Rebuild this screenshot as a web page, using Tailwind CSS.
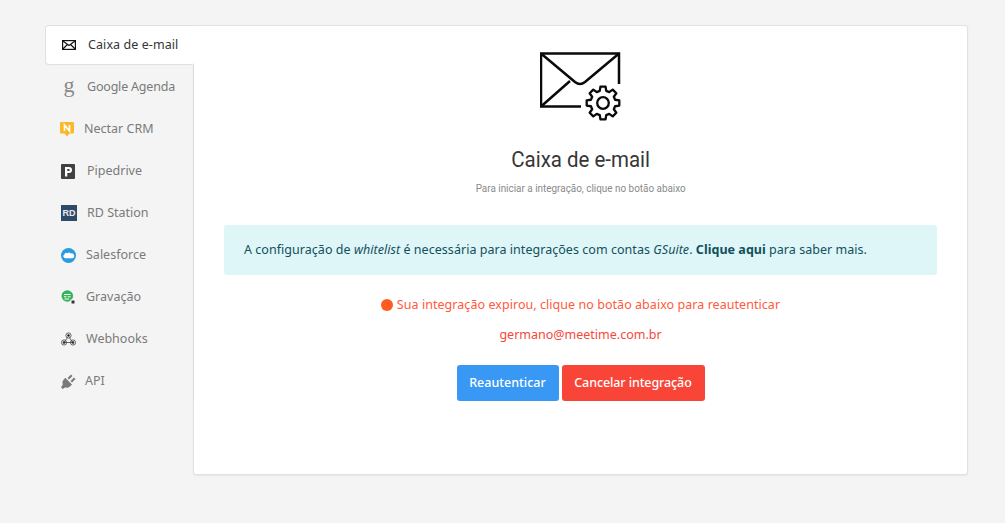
<!DOCTYPE html>
<html lang="pt-BR">
<head>
<meta charset="utf-8">
<script src="https://cdn.jsdelivr.net/npm/@tailwindcss/browser@4"></script>
</head>
<body class="bg-[#f4f4f4]">
<div class="h-[523px] w-[1005px] overflow-hidden flex items-start pt-[25px] pl-[45px] font-['Noto_Sans',sans-serif] text-[12.5px]">
  <nav class="w-[149px] shrink-0 relative z-10 flex flex-col">
    <a class="h-[40px] w-[149px] flex items-center pl-[16px] bg-white border border-[#e0e0e0] border-r-0 rounded-l-[4px] rounded-br-[2px] text-[#363636] tracking-[0.08px]">
      <svg class="w-[14px] h-[10px] mr-[12px]" viewBox="0 0 14 10" fill="none" stroke="#111" stroke-width="1.2"><rect x=".6" y=".6" width="12.8" height="8.8"/><path d="M.6.8 7 5.6 13.4.8M.6 9.2l4.6-4.4M13.4 9.2 8.8 4.8"/></svg>
      <span>Caixa de e-mail</span>
    </a>
    <div class="border-r border-[#dedede] flex flex-col text-[#7a7a7a] pt-px">
      <a class="h-[42px] flex items-center pl-[17px]">
        <span class="w-[14px] h-[18px] mr-[11px] text-center text-[#8a8a8a] text-[22px] leading-[13px] font-['Liberation_Serif',serif]">g</span>
        <span class="tracking-[-0.2px]">Google Agenda</span>
      </a>
      <a class="h-[42px] flex items-center pl-[15px]">
        <svg class="w-[14px] h-[16px] mr-[10px]" viewBox="0 0 14 16"><path d="M1 1h12a1 1 0 0 1 1 1v9.500a1 1 0 0 1-1 1H9.500L7 15.500 4.500 12.500H1a1 1 0 0 1-1-1V2a1 1 0 0 1 1-1z" fill="#fbb829"/><path d="M4.500 10V4l5 6V4" fill="none" stroke="#fff" stroke-width="1.700"/></svg>
        <span>Nectar CRM</span>
      </a>
      <a class="h-[42px] flex items-center pl-[16px]">
        <svg class="w-[14px] h-[15px] mr-[12px]" viewBox="0 0 14 15"><rect width="14" height="15" rx="1" fill="#3f4142"/><path d="M4 3h4a2.700 2.700 0 0 1 0 6H6.300v3.500H4zM6.300 4.900v2.200h1.400a1.100 1.100 0 0 0 0-2.200z" fill="#fff" fill-rule="evenodd"/></svg>
        <span>Pipedrive</span>
      </a>
      <a class="h-[42px] flex items-center pl-[16px]">
        <span class="w-[16px] h-[16px] mr-[10px] bg-[#2f4a68] text-[#e8edf2] text-[9px] font-bold leading-[16px] text-center font-['Liberation_Sans',sans-serif]">RD</span>
        <span>RD Station</span>
      </a>
      <a class="h-[42px] flex items-center pl-[16px]">
        <svg class="w-[15px] h-[15px] mr-[10px]" viewBox="0 0 15 15"><circle cx="7.500" cy="7.500" r="7.500" fill="#2b9be0"/><path d="M4.200 10.200a1.900 1.900 0 0 1-.8-3.600A2 2 0 0 1 6.600 5.300a2.100 2.100 0 0 1 3.200.3 2.400 2.400 0 0 1 1.800 4.600z" fill="#fff"/></svg>
        <span>Salesforce</span>
      </a>
      <a class="h-[42px] flex items-center pl-[16px]">
        <svg class="w-[14px] h-[14px] mr-[11px]" viewBox="0 0 14 14"><circle cx="6.300" cy="6" r="5.800" fill="#35b55a"/><path d="M3 4.500h6.500M3 6.800h2.500M6.800 6.800h2.700M3.500 9h4.500" stroke="#fff" stroke-width="1"/><rect x="9.500" y="9.500" width="4" height="4" fill="#fff"/><rect x="10.500" y="10.500" width="3" height="3" fill="#333"/></svg>
        <span>Gravação</span>
      </a>
      <a class="h-[42px] flex items-center pl-[16px]">
        <svg class="w-[15px] h-[14px] mr-[10px]" viewBox="0 0 15 14" fill="none" stroke="#444" stroke-width=".8"><circle cx="7.500" cy="3.500" r="2.600"/><circle cx="3" cy="10.500" r="2.600"/><circle cx="12" cy="10.500" r="2.600"/><path d="M6.500 5.500 3.500 10M8.500 5.500l3 5M3 10.500h9"/><circle cx="7.500" cy="3.500" r="1" fill="#111"/><circle cx="3" cy="10.500" r="1" fill="#111"/><circle cx="12" cy="10.500" r="1" fill="#111"/></svg>
        <span>Webhooks</span>
      </a>
      <a class="h-[42px] flex items-center pl-[16px]">
        <svg class="w-[15px] h-[15px] mr-[9px]" viewBox="0 0 15 15" fill="#7a7a7a"><path d="M4.200 3.800 11 10.600 9 12.600a4 4 0 0 1-4.600.6L1.800 15 0 13.200l1.800-2.600A4 4 0 0 1 2.400 6z"/><path d="M6.500 4 10 .5l1.500 1.500L8 5.500zM9.500 7 13 3.500 14.500 5 11 8.500z"/></svg>
        <span>API</span>
      </a>
    </div>
  </nav>
  <main class="w-[775px] h-[450px] -ml-px bg-white border border-[#e2e2e2] rounded-[3px] shadow-[0_1px_2px_rgba(0,0,0,0.06)] flex flex-col items-center pt-[26px] px-[30px]">
    <svg class="w-[82px] h-[70px]" viewBox="0 0 82 70" fill="none" stroke="#0a0a0a" stroke-width="2.500">
      <path d="M79 32V1.500H1V54.500H41"/>
      <path d="M1 1.500 35 30q5 4 10 0L79 1.500M1 54.500 30 29"/>
      <g transform="translate(63 51)" stroke-width="2.300" stroke-linejoin="round">
        <path d="M-3.240-12.070-2.580-16.300H2.580L3.240-12.070 6.250-10.830 9.700-13.350 13.350-9.700 10.830-6.250 12.070-3.240 16.300-2.580V2.580L12.070 3.240 10.830 6.250 13.350 9.700 9.700 13.350 6.250 10.830 3.240 12.070 2.580 16.300H-2.580L-3.240 12.070-6.250 10.830-9.700 13.350-13.350 9.700-10.830 6.250-12.070 3.240-16.300 2.580V-2.580L-12.070-3.240-10.830-6.250-13.350-9.700-9.700-13.350-6.250-10.830z"/>
        <circle r="5.800"/>
      </g>
    </svg>
    <h1 class="mt-[23px] text-[22px] leading-[30px] text-[#363636] font-['Roboto',sans-serif] font-normal scale-x-[0.93]">Caixa de e-mail</h1>
    <p class="mt-[6px] text-[11px] leading-[16px] text-[#8a8a8a] font-['Roboto',sans-serif] scale-x-90">Para iniciar a integração, clique no botão abaixo</p>
    <div class="mt-[28px] w-[713px] h-[50px] shrink-0 bg-[#dff6f9] rounded-[3px] flex items-center pl-[20px] text-[#12505a] whitespace-nowrap tracking-[0.04px]">
      <p>A configuração de <em>whitelist</em> é necessária para integrações com contas <em>GSuite</em>. <strong>Clique aqui</strong> para saber mais.</p>
    </div>
    <p class="mt-[20px] h-[20px] flex items-center text-[#ff5a3c] whitespace-nowrap tracking-[0.05px]">
      <span class="w-[12px] h-[12px] rounded-full bg-[#ff5a1f] mr-[4px]"></span>Sua integração expirou, clique no botão abaixo para reautenticar
    </p>
    <p class="mt-[10px] h-[20px] leading-[20px] text-[#f5483a]">germano@meetime.com.br</p>
    <div class="mt-[20px] flex gap-[3px]">
      <button class="w-[102px] h-[36px] rounded-[3px] bg-[#3898f3] text-white font-medium">Reautenticar</button>
      <button class="w-[143px] h-[36px] rounded-[3px] bg-[#f94538] text-white font-medium tracking-[-0.1px]">Cancelar integração</button>
    </div>
  </main>
</div>
</body>
</html>
